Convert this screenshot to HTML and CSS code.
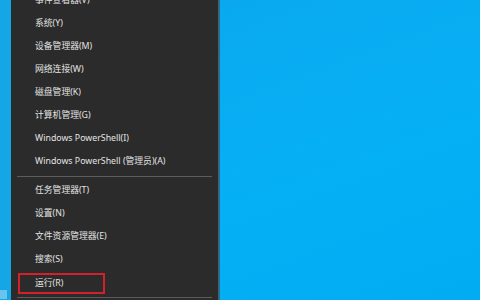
FILE: index.html
```html
<!DOCTYPE html>
<html lang="zh-CN">
<head>
    <meta charset="UTF-8">
    <title>Win+X 菜单</title>
    <link rel="stylesheet" href="styles.css">
</head>
<body>
    <div class="screen">
        <div class="edge">
            <div class="edge-icon"></div>
        </div>
        <div class="menu">
            <div class="menu-list">
                <div class="item">事件查看器(V)</div>
                <div class="item">系统(Y)</div>
                <div class="item">设备管理器(M)</div>
                <div class="item">网络连接(W)</div>
                <div class="item">磁盘管理(K)</div>
                <div class="item">计算机管理(G)</div>
                <div class="item">Windows PowerShell(I)</div>
                <div class="item">Windows PowerShell (管理员)(A)</div>
                <div class="sep"></div>
                <div class="item">任务管理器(T)</div>
                <div class="item">设置(N)</div>
                <div class="item">文件资源管理器(E)</div>
                <div class="item">搜索(S)</div>
                <div class="item marked"><span class="mark">运行(R)</span></div>
                <div class="sep"></div>
            </div>
        </div>
        <div class="desktop"></div>
    </div>
</body>
</html>
```

FILE: styles.css
```css
body {
    margin: 0;
    font-family: "Noto Sans", "Noto Sans CJK SC", sans-serif;
    overflow: hidden;
}
.screen {
    display: flex;
    width: 480px;
    height: 300px;
    overflow: hidden;
}
.edge {
    width: 11px;
    background-color: #15a6e6;
    display: flex;
    flex-direction: column;
    justify-content: flex-end;
}
.edge-icon {
    width: 7px;
    height: 9px;
    margin-bottom: 1px;
    background-color: #8fd2ef;
    opacity: 0.7;
}
.menu {
    width: 207px;
    background-color: #2b2b2b;
    border-right: 1px solid #5a5a5a;
    box-shadow: 1px 0 0 #1773a6;
}
.menu-list {
    margin-top: -11px;
}
.item {
    height: 23px;
    line-height: 23px;
    padding-left: 24px;
    font-size: 8.8px;
    color: #e4e4e4;
    white-space: nowrap;
}
.sep {
    height: 6px;
    display: flex;
    align-items: center;
    padding: 0 6px 0 6px;
}
.sep::before {
    content: "";
    flex: 1;
    height: 1px;
    background-color: #5c5c5c;
}
.item.marked {
    padding-left: 7px;
    padding-top: 2px;
    height: 21px;
}
.mark {
    display: block;
    width: 68px;
    height: 17px;
    line-height: 17px;
    padding-left: 15px;
    border: 2px solid #d3202a;
}
.desktop {
    flex: 1;
    margin-left: 1px;
    background: linear-gradient(160deg, #0aa9ef 0%, #06b0f5 55%, #02acf2 100%);
}
```
